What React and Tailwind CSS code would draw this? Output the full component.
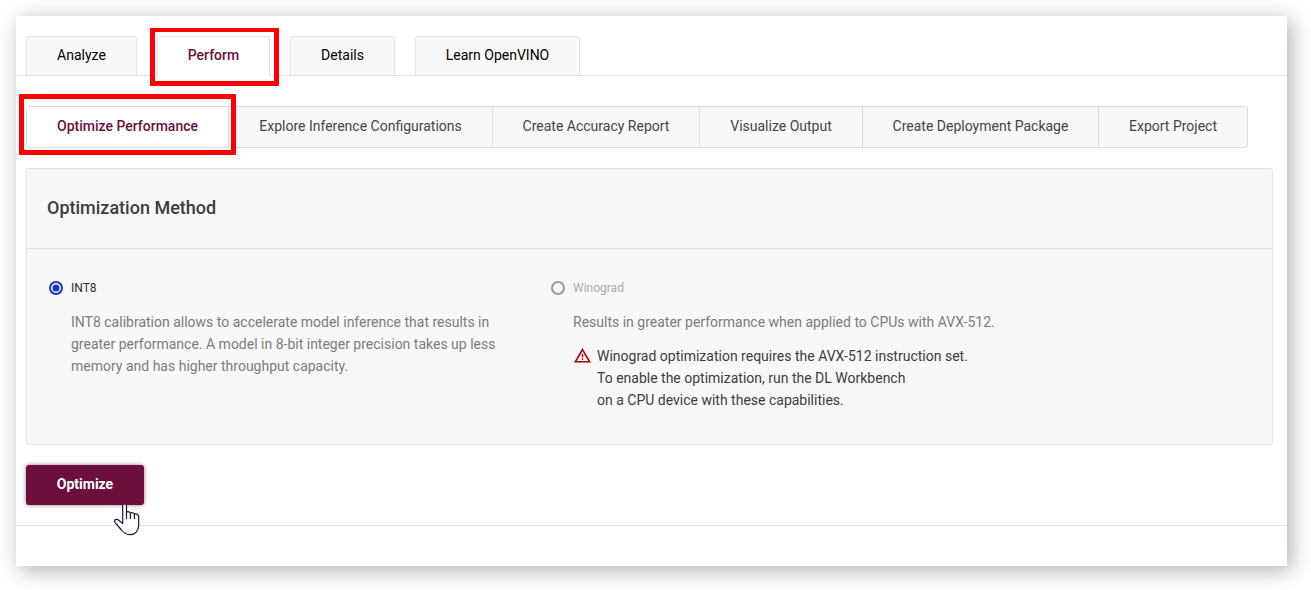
const tabs = [
  { label: 'Analyze', width: 'w-[111px]' },
  { label: 'Perform', width: 'w-[113px]', active: true },
  { label: 'Details', width: 'w-[105px]' },
  { label: 'Learn OpenVINO', width: 'w-[165px]' },
];

const actions = [
  { label: 'Optimize Performance', width: 'w-[202px]', active: true },
  { label: 'Explore Inference Configurations', width: 'w-[264px]' },
  { label: 'Create Accuracy Report', width: 'w-[207px]' },
  { label: 'Visualize Output', width: 'w-[163px]' },
  { label: 'Create Deployment Package', width: 'w-[236px]' },
  { label: 'Export Project', width: 'w-[148px]' },
];

function Tabs() {
  return (
    <nav className="flex h-[60px] items-end gap-5 border-b border-[#e2e2e2] pl-[10px]">
      {tabs.map((t) => (
        <div
          key={t.label}
          className={`relative -mb-px flex h-10 shrink-0 justify-center rounded-t-[3px] border border-[#e2e2e2] pt-[8px] leading-5 ${t.width} ${
            t.active ? 'border-b-white bg-white font-medium text-[#6c0f3c]' : 'bg-[#f8f8f8] text-black'
          }`}
        >
          {t.label}
          {t.active && <span className="absolute -left-2 -top-[9px] h-[58px] w-[129px] rounded-[1px] border-[5px] border-t-4 border-[#ff0000]" />}
        </div>
      ))}
    </nav>
  );
}

function Actions() {
  return (
    <div className="ml-[10px] mt-[30px] flex h-[42px] w-[1222px] rounded-[3px] border border-[#dcdcdc] bg-[#f8f8f8]">
      {actions.map((a) => (
        <div
          key={a.label}
          className={`relative flex shrink-0 justify-center border-r border-[#dcdcdc] pt-[9px] leading-5 last:border-r-0 ${a.width} ${
            a.active ? 'rounded-l-[3px] bg-white font-medium text-[#6c0f3c]' : 'text-[#444]'
          }`}
        >
          {a.label}
          {a.active && <span className="absolute -left-2 -top-[13px] h-[61px] w-[217px] rounded-[1px] border-[5px] border-[#ff0000]" />}
        </div>
      ))}
    </div>
  );
}

function WarningIcon() {
  return (
    <svg className="ml-px mt-[3px] h-4 w-[18px] shrink-0" viewBox="0 0 18 16" fill="none" stroke="#b00000">
      <path d="M8.5 1.7 15.6 13.8H1.4Z" strokeWidth="1.6" />
      <path d="M8.5 6V9.5M8.5 10.6v1.5" strokeWidth="1.4" />
    </svg>
  );
}

function HandCursor() {
  return (
    <svg className="absolute left-[88px] top-[38px] h-[33px] w-[27px]" viewBox="0 0 27 33" fill="#fff" stroke="#1a1a2e" strokeWidth="1.2" strokeLinejoin="round" strokeLinecap="round">
      <path d="M8.7 20.5V2.8C8.7.3 12.5.3 12.5 2.8V9.2Q14.6 7.8 16.4 10Q18.7 8.8 20.4 11Q24.7 10.2 24.7 14.5V22C24.7 28 21 31.7 16 31.7C12.5 31.7 10 30.2 7.5 27L.9 19.3C-.5 16.5 2.5 15.8 4.5 17Z" />
      <path d="M12.5 9.2V15.5M16.4 10V15.5M20.4 11V15.5" />
    </svg>
  );
}

export default function App() {
  return (
    <div className="h-[590px] w-[1311px] overflow-hidden bg-white p-4 font-['Roboto',sans-serif] text-[14px]">
      <main className="h-[550px] w-[1271px] bg-white shadow-[4px_4px_20px_rgba(0,0,0,0.32)]">
        <Tabs />
        <Actions />
        <section className="ml-[10px] mt-5 h-[277px] w-[1247px] rounded-[3px] border border-[#e2e2e2] bg-[#f8f8f8]">
          <h2 className="h-20 border-b border-[#e2e2e2] pl-5 pt-[27px] text-[18px] font-medium leading-6 text-[#3c3c3c]">Optimization Method</h2>
          <div className="flex pl-[22px] pt-[31px]">
            <div className="w-[502px]">
              <label className="flex h-4 items-center gap-2 text-[12px] text-[#2c2c2c]">
                <svg className="size-[14px]" viewBox="0 0 14 14" fill="none" stroke="#1437c8" strokeWidth="2">
                  <circle cx="7" cy="7" r="6" />
                  <circle cx="7" cy="7" r="3.5" fill="#1437c8" stroke="none" />
                </svg>
                INT8
              </label>
              <p className="ml-[22px] mt-[15px] leading-[22px] text-[#7c7c7c]">
                INT8 calibration allows to accelerate model inference that results in
                <br />
                greater performance. A model in 8-bit integer precision takes up less
                <br />
                memory and has higher throughput capacity.
              </p>
            </div>
            <div>
              <label className="flex h-4 items-center gap-2 text-[12px] text-[#aaa]">
                <span className="size-[14px] rounded-full border-2 border-[#999]" />
                Winograd
              </label>
              <p className="ml-[22px] mt-[15px] leading-[22px] text-[#7c7c7c]">Results in greater performance when applied to CPUs with AVX-512.</p>
              <div className="ml-[22px] mt-3 flex gap-[5px] leading-[22px] text-[#3c3c3c]">
                <WarningIcon />
                <p>
                  Winograd optimization requires the AVX-512 instruction set.
                  <br />
                  To enable the optimization, run the DL Workbench
                  <br />
                  on a CPU device with these capabilities.
                </p>
              </div>
            </div>
          </div>
        </section>
        <div className="flex h-[81px] border-b border-[#e2e2e2] pl-[10px] pt-5">
          <button className="relative h-10 w-[118px] rounded-[3px] bg-[#6c0f3c] pb-[2px] font-bold text-white shadow-[0_0_4px_rgba(108,15,60,0.6)]">
            Optimize
            <HandCursor />
          </button>
        </div>
      </main>
    </div>
  );
}
